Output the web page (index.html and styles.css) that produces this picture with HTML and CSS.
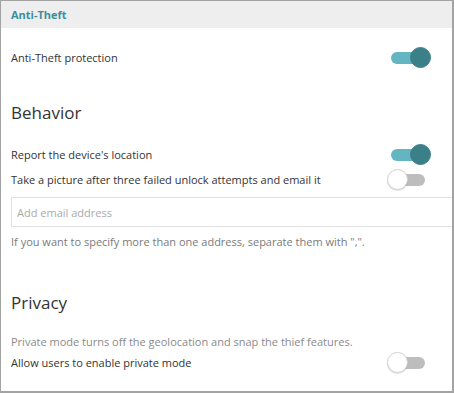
FILE: index.html
```html
<!DOCTYPE html>
<html lang="en">
<head>
  <meta charset="UTF-8" />
  <title>Anti-Theft</title>
  <link rel="stylesheet" href="styles.css">
</head>
<body>
  <div class="panel">
    <div class="panel-head">Anti-Theft</div>

    <div class="panel-body">
      <div class="row row-first">
        <span>Anti-Theft protection</span>
        <span class="switch on"><span class="thumb"></span></span>
      </div>

      <h2 class="section-title behavior">Behavior</h2>

      <div class="row">
        <span>Report the device's location</span>
        <span class="switch on"><span class="thumb"></span></span>
      </div>
      <div class="row row-tight">
        <span>Take a picture after three failed unlock attempts and email it</span>
        <span class="switch"><span class="thumb"></span></span>
      </div>

      <input class="email" type="text" placeholder="Add email address" />
      <p class="hint">If you want to specify more than one address, separate them with ",".</p>

      <h2 class="section-title privacy">Privacy</h2>

      <p class="desc">Private mode turns off the geolocation and snap the thief features.</p>
      <div class="row row-last">
        <span>Allow users to enable private mode</span>
        <span class="switch"><span class="thumb"></span></span>
      </div>
    </div>
  </div>
</body>
</html>
```

FILE: styles.css
```css
body {
  margin: 0;
  padding: 0;
  font-family: 'Open Sans', sans-serif;
  font-size: 11px;
  color: #333;
  background: #fff;
}
.panel {
  box-sizing: border-box;
  width: 454px;
  height: 393px;
  border: 1px solid #a3a3a3;
  border-right-width: 2px;
  border-bottom-width: 2px;
  overflow: hidden;
}
.panel-head {
  height: 27px;
  line-height: 28px;
  padding: 0 10px;
  background: #eeeeee;
  color: #3a8f9c;
  font-weight: 700;
}
.panel-body {
  padding: 0 0 0 10px;
}
.row {
  display: flex;
  align-items: center;
  justify-content: space-between;
  height: 20px;
  line-height: 20px;
}
.row-first {
  margin-top: 20px;
}
.row-tight {
  margin-top: 5px;
}
.section-title {
  margin: 0;
  font-size: 17px;
  font-weight: 400;
  line-height: 24px;
  color: #333;
}
.behavior {
  margin-top: 33px;
  margin-bottom: 20px;
}
.privacy {
  margin-top: 39px;
  margin-bottom: 17px;
}
.switch {
  position: relative;
  width: 34px;
  height: 12px;
  margin-right: 27px;
  border-radius: 6px;
  background: #bdbdbd;
  flex-shrink: 0;
}
.switch .thumb {
  position: absolute;
  top: -5px;
  left: -4px;
  box-sizing: border-box;
  width: 21px;
  height: 21px;
  border-radius: 50%;
  background: #fff;
  border: 1px solid #d0d0d0;
  box-shadow: 0 1px 1px rgba(0,0,0,0.12);
}
.switch.on {
  background: #63b5c2;
}
.switch.on .thumb {
  left: 19px;
  background: #3b7f89;
  border-color: #3b7f89;
  box-shadow: none;
}
.email {
  display: block;
  box-sizing: border-box;
  width: 460px;
  height: 30px;
  margin-top: 7px;
  padding: 0 5px;
  border: 1px solid #e2e2e2;
  font-family: 'Open Sans', sans-serif;
  font-size: 11px;
  color: #333;
  outline: none;
}
.email::placeholder {
  color: #aaa;
}
.hint {
  margin: 5px 0 0;
  line-height: 20px;
  color: #7a7a7a;
}
.desc {
  margin: 0;
  line-height: 20px;
  color: #8a8a8a;
}
.row-last {
  margin-top: 1px;
}
```
